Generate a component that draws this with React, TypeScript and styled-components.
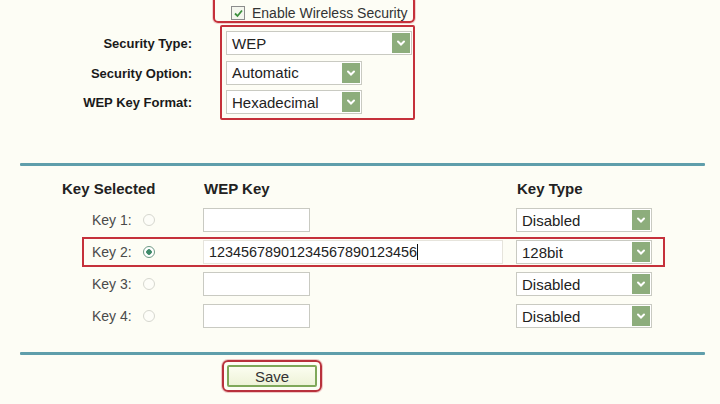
import styled, { createGlobalStyle } from 'styled-components';

const GlobalStyle = createGlobalStyle`
  html, body {
    margin: 0;
    padding: 0;
    background: #fdfdf5;
  }
  body {
    font-family: "Liberation Sans", Arial, sans-serif;
    color: #222;
  }
`;

const keys = [
  { id: 1, value: '', type: 'Disabled' },
  { id: 2, value: '12345678901234567890123456', type: '128bit' },
  { id: 3, value: '', type: 'Disabled' },
  { id: 4, value: '', type: 'Disabled' },
];

const Chevron = () => (
  <svg width="10" height="8" viewBox="0 0 10 8">
    <path d="M2 2.5 L5 5.5 L8 2.5" fill="none" stroke="#fff" strokeWidth="2" strokeLinecap="round" />
  </svg>
);

type SelectProps = { value: string; width: number };

const Dropdown: React.FC<SelectProps> = ({ value, width }) => (
  <Select $width={width}>
    <SelectValue>{value}</SelectValue>
    <SelectArrow>
      <Chevron />
    </SelectArrow>
  </Select>
);

export default function App() {
  return (
    <>
      <GlobalStyle />
      <Page>
        <TopGrid>
          <span />
          <CheckHighlight>
            <CheckBox>
              <svg width="11" height="11" viewBox="0 0 11 11">
                <path d="M2 5.5 L4.5 8 L9 2.5" fill="none" stroke="#3d8f3d" strokeWidth="1.8" />
              </svg>
            </CheckBox>
            <CheckLabel>Enable Wireless Security</CheckLabel>
          </CheckHighlight>

          <Labels>
            <FieldLabel>Security Type:</FieldLabel>
            <FieldLabel>Security Option:</FieldLabel>
            <FieldLabel>WEP Key Format:</FieldLabel>
          </Labels>
          <SelectHighlight>
            <Dropdown value="WEP" width={186} />
            <Dropdown value="Automatic" width={136} />
            <Dropdown value="Hexadecimal" width={136} />
          </SelectHighlight>
        </TopGrid>

        <Divider />

        <HeaderRow>
          <HeaderCell>Key Selected</HeaderCell>
          <HeaderCell>WEP Key</HeaderCell>
          <HeaderCell>Key Type</HeaderCell>
        </HeaderRow>

        <KeyList>
          {keys.map((k) => (
            <KeyRow key={k.id} $active={k.id === 2}>
              <KeyCell>
                <KeyName>Key {k.id}:</KeyName>
                <Radio $checked={k.id === 2} />
              </KeyCell>
              <KeyInput $wide={k.value.length > 0}>
                {k.value}
                {k.value && <Caret />}
              </KeyInput>
              <Dropdown value={k.type} width={136} />
            </KeyRow>
          ))}
        </KeyList>

        <Divider $bottom />

        <SaveRow>
          <SaveHighlight>
            <SaveButton>Save</SaveButton>
          </SaveHighlight>
        </SaveRow>
      </Page>
    </>
  );
}

const Page = styled.div`
  width: 720px;
  height: 404px;
  overflow: hidden;
  background: #fdfdf5;
  display: flex;
  flex-direction: column;
`;

const TopGrid = styled.div`
  display: grid;
  grid-template-columns: 192px 195px;
  column-gap: 28px;
  row-gap: 2px;
`;

const CheckHighlight = styled.div`
  margin-left: -7px;
  margin-top: -4px;
  height: 27px;
  display: flex;
  align-items: center;
  gap: 7px;
  padding: 7px 0 0 16px;
  box-sizing: border-box;
  border: 2px solid #c5313b;
  border-radius: 5px;
  box-shadow: 0 0 0 1px rgba(210, 80, 90, 0.25);
`;

const CheckBox = styled.span`
  width: 12px;
  height: 12px;
  border: 1px solid #8c8c8c;
  background: #f4f6ee;
  display: flex;
  align-items: center;
  justify-content: center;
`;

const CheckLabel = styled.span`
  font-size: 14px;
  color: #333;
`;

const Labels = styled.div`
  display: flex;
  flex-direction: column;
  gap: 5.5px;
  padding-top: 7px;
`;

const FieldLabel = styled.div`
  height: 24px;
  line-height: 24px;
  text-align: right;
  font-size: 13px;
  font-weight: 700;
  color: #1a1a1a;
`;

const SelectHighlight = styled.div`
  height: 95px;
  box-sizing: border-box;
  border: 2px solid #c5313b;
  border-radius: 2px;
  padding: 4px 0 0 4px;
  display: flex;
  flex-direction: column;
  gap: 5.5px;
`;

const Select = styled.div<{ $width: number }>`
  width: ${(p) => p.$width}px;
  height: 24px;
  box-sizing: border-box;
  border: 1px solid #c9cac2;
  background: #fff;
  display: flex;
  align-items: center;
  justify-content: space-between;
  padding: 0 1px 0 5px;
`;

const SelectValue = styled.span`
  font-size: 15px;
  color: #222;
`;

const SelectArrow = styled.span`
  width: 18px;
  height: 20px;
  background: #8dad7c;
  display: flex;
  align-items: center;
  justify-content: center;
`;

const Divider = styled.div<{ $bottom?: boolean }>`
  margin: ${(p) => (p.$bottom ? '21px' : '43px')} 15px 0 20px;
  height: 3px;
  background: #5f9eab;
  border-radius: 1px;
`;

const HeaderRow = styled.div`
  margin-top: 10px;
  padding-left: 62px;
  display: grid;
  grid-template-columns: 142px 313px auto;
  height: 24px;
  align-items: center;
`;

const HeaderCell = styled.span`
  font-size: 15px;
  font-weight: 700;
  color: #222;
`;

const KeyList = styled.div`
  margin-top: 5px;
  padding-left: 82px;
  display: flex;
  flex-direction: column;
  gap: 2px;
`;

const KeyRow = styled.div<{ $active: boolean }>`
  width: 583px;
  height: 30px;
  box-sizing: border-box;
  border: 2px solid ${(p) => (p.$active ? '#c5313b' : 'transparent')};
  display: grid;
  grid-template-columns: 119px 313px 136px;
  align-items: center;
`;

const KeyCell = styled.div`
  display: flex;
  align-items: center;
  padding-left: 8px;
  gap: 10px;
`;

const KeyName = styled.span`
  font-size: 14px;
  color: #4a4a4a;
  width: 41px;
`;

const Radio = styled.span<{ $checked: boolean }>`
  width: 12px;
  height: 12px;
  border-radius: 50%;
  box-sizing: border-box;
  border: 1px solid ${(p) => (p.$checked ? '#6f9a86' : '#d6d7cf')};
  background: ${(p) =>
    p.$checked ? 'radial-gradient(circle, #3f8a6a 0 2.5px, #fff 3px)' : '#fdfdf8'};
`;

const KeyInput = styled.div<{ $wide: boolean }>`
  width: ${(p) => (p.$wide ? '300px' : '107px')};
  height: 24px;
  box-sizing: border-box;
  border: 1px solid ${(p) => (p.$wide ? '#e6e4dc' : '#c9cac2')};
  background: #fff;
  display: flex;
  align-items: center;
  padding-left: 5px;
  font-size: 14.4px;
  color: #222;
`;

const Caret = styled.span`
  width: 1px;
  height: 16px;
  background: #111;
`;

const SaveRow = styled.div`
  padding: 5px 0 0 222px;
  display: flex;
`;

const SaveHighlight = styled.div`
  width: 100px;
  height: 32px;
  box-sizing: border-box;
  border: 2px solid #b8313c;
  border-radius: 6px;
  box-shadow: 0 0 0 1px rgba(210, 80, 90, 0.3);
  display: flex;
  align-items: center;
  justify-content: center;
`;

const SaveButton = styled.div`
  width: 90px;
  height: 22px;
  box-sizing: border-box;
  border: 2px solid #7fa85a;
  border-radius: 2px;
  background: linear-gradient(#fbfdf0, #eef3d8);
  display: flex;
  align-items: center;
  justify-content: center;
  font-size: 15px;
  color: #333;
`;
